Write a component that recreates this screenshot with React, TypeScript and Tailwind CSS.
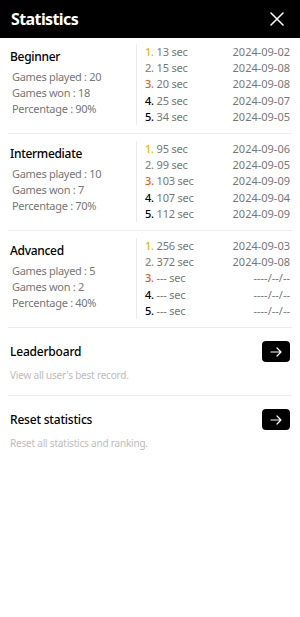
import React from 'react';

type Record = { time: string; date: string };
type Level = { name: string; played: number; won: number; pct: number; records: Record[] };

const levels: Level[] = [
  {
    name: 'Beginner',
    played: 20,
    won: 18,
    pct: 90,
    records: [
      { time: '13', date: '2024-09-02' },
      { time: '15', date: '2024-09-08' },
      { time: '20', date: '2024-09-08' },
      { time: '25', date: '2024-09-07' },
      { time: '34', date: '2024-09-05' },
    ],
  },
  {
    name: 'Intermediate',
    played: 10,
    won: 7,
    pct: 70,
    records: [
      { time: '95', date: '2024-09-06' },
      { time: '99', date: '2024-09-05' },
      { time: '103', date: '2024-09-09' },
      { time: '107', date: '2024-09-04' },
      { time: '112', date: '2024-09-09' },
    ],
  },
  {
    name: 'Advanced',
    played: 5,
    won: 2,
    pct: 40,
    records: [
      { time: '256', date: '2024-09-03' },
      { time: '372', date: '2024-09-08' },
      { time: '---', date: '----/--/--' },
      { time: '---', date: '----/--/--' },
      { time: '---', date: '----/--/--' },
    ],
  },
];

const rankColors = ['text-[#f5b400]', 'text-[#8a8a8a]', 'text-[#e2630c]', 'text-black', 'text-black'];

function LevelBlock({ level, first }: { level: Level; first?: boolean }) {
  return (
    <section className={`mx-2 flex border-b border-[#ececec] pb-[8px] ${first ? 'pt-[6px]' : 'pt-[7px]'}`}>
      <div className="flex w-[128px] flex-col justify-center pb-[3px] pl-[2px] tracking-[-0.3px]">
        <h3 className="text-[12px] font-medium leading-[16px] text-black">{level.name}</h3>
        <div className="mt-[4px] pl-[2px] text-[11px] leading-[16px] text-[#777]">
          <p>Games played : {level.played}</p>
          <p>Games won : {level.won}</p>
          <p>Percentage : {level.pct}%</p>
        </div>
      </div>
      <ul className="flex-1 border-l border-[#ececec] pl-[8px] pr-[2px] text-[11px] leading-[16.2px]">
        {level.records.map((r, i) => (
          <li key={i} className="flex justify-between text-[#777]">
            <span className="tracking-[-0.2px]">
              <span className={`font-medium ${rankColors[i]}`}>{i + 1}.</span> {r.time} sec
            </span>
            <span>{r.date}</span>
          </li>
        ))}
      </ul>
    </section>
  );
}

function ArrowButton() {
  return (
    <button className="flex h-[21px] w-[28px] items-center justify-center rounded-[4px] bg-black">
      <svg width="12" height="10" viewBox="0 0 12 10" fill="none" stroke="white" strokeWidth="1.2" strokeLinecap="round" strokeLinejoin="round">
        <path d="M1 5h10M7 1l4 4-4 4" />
      </svg>
    </button>
  );
}

function MenuRow({ title, desc, last }: { title: string; desc: string; last?: boolean }) {
  return (
    <div className={`mx-2 px-[2px] pt-[13px] pb-[13px] ${last ? '' : 'border-b border-[#ececec]'}`}>
      <div className="flex items-center justify-between">
        <h3 className="text-[12px] font-medium tracking-[-0.2px] text-black">{title}</h3>
        <ArrowButton />
      </div>
      <p className="mt-[6px] text-[10px] leading-[14px] tracking-[-0.2px] text-[#bdbdbd]">{desc}</p>
    </div>
  );
}

export default function App() {
  return (
    <div className="min-h-[617px] w-[300px] bg-white" style={{ fontFamily: '"Noto Sans", "Open Sans", sans-serif' }}>
      <header className="flex h-[38px] items-center justify-between bg-black pl-[11px] pr-[16px]">
        <h1 className="text-[16px] font-bold tracking-[-0.6px] text-white">Statistics</h1>
        <svg width="14" height="14" viewBox="0 0 14 14" stroke="white" strokeWidth="1.5" strokeLinecap="round">
          <path d="M1 1l12 12M13 1L1 13" />
        </svg>
      </header>
      {levels.map((l, i) => (
        <LevelBlock key={l.name} level={l} first={i === 0} />
      ))}
      <MenuRow title="Leaderboard" desc="View all user's best record." />
      <MenuRow title="Reset statistics" desc="Reset all statistics and ranking." last />
    </div>
  );
}
